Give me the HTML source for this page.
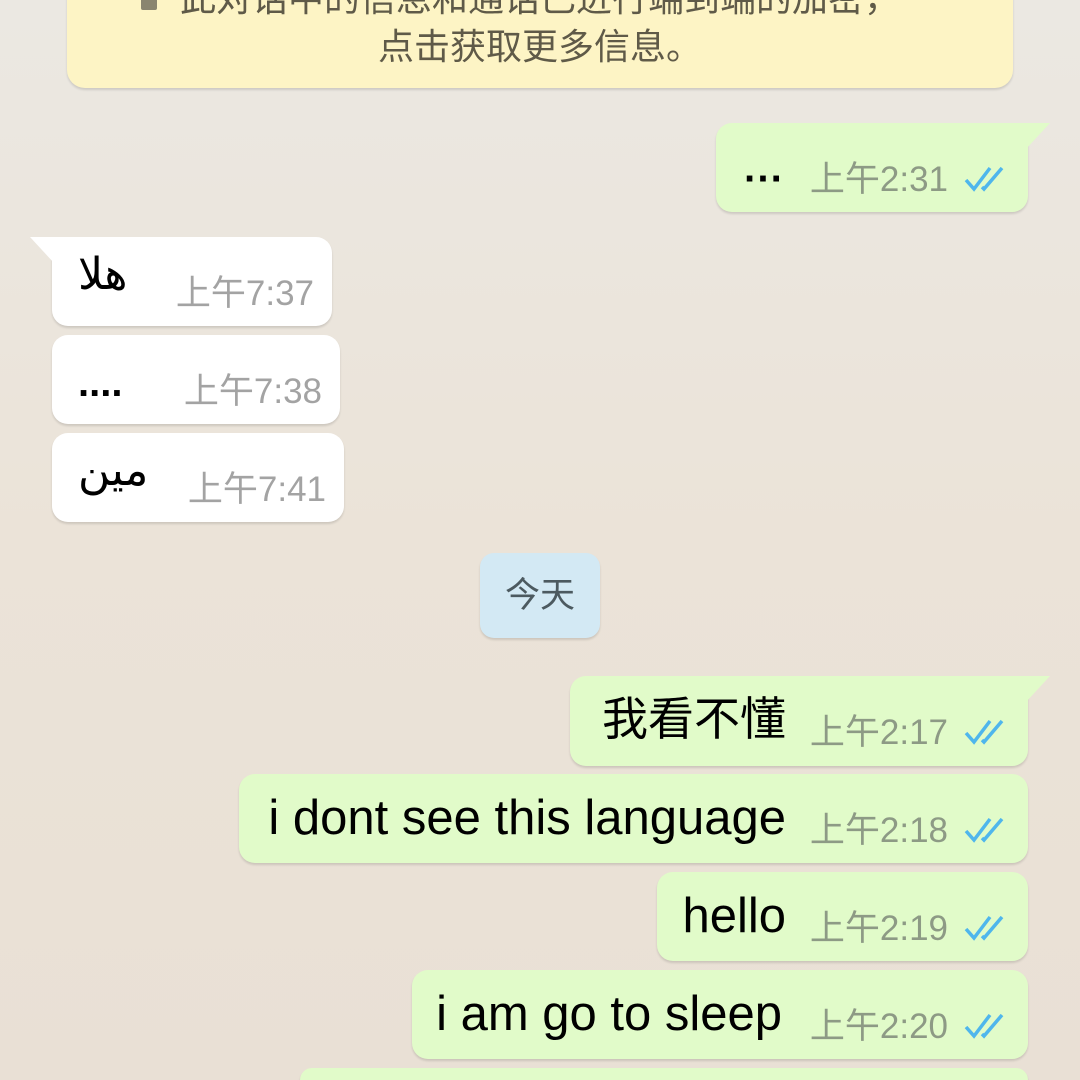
<!DOCTYPE html>
<html><head><meta charset="utf-8"><style>
html,body{margin:0;padding:0;width:1080px;height:1080px;overflow:hidden}
body{position:relative;background:linear-gradient(#ebe8e2,#ebe3d8 50%,#e9e0d5);font-family:"Liberation Sans","Noto Sans CJK SC",sans-serif}
.b{position:absolute;border-radius:16px;box-shadow:0 2px 2px rgba(0,0,0,.13)}
.s{background:#e1fbc9}
.r{background:#fff}
.t{position:absolute;font-size:49px;color:#000;white-space:nowrap;line-height:1}
.tm{position:absolute;font-size:35px;white-space:nowrap;line-height:1;color:#8d9a85}
.r .tm{color:#a3a3a3}
.ck{position:absolute;width:44px;height:28px}
.tailR{position:absolute;right:-22px;top:0;width:0;height:0;border-top:26px solid #e1fbc9;border-right:24px solid transparent}
.tailL{position:absolute;left:-22px;top:0;width:0;height:0;border-top:26px solid #fff;border-left:24px solid transparent}
.ar{font-family:"DejaVu Sans",sans-serif;font-size:44px}
</style></head><body>

<div class="b" style="left:67px;top:-30px;width:946px;height:118px;background:#fdf4c5;border-radius:18px">
<div style="position:absolute;left:74px;top:26px;width:16px;height:14px;background:#8a8570;border-radius:2px"></div>
<div style="position:absolute;left:0;right:0;top:5px;text-align:center;font-size:36px;color:#5f5a48;line-height:48px">此对话中的信息和通话已进行端到端的加密，<br>点击获取更多信息。</div>
</div>

<div class="b s" style="left:716px;top:123px;width:312px;height:89px;border-top-right-radius:0">
<div class="tailR"></div>
<div class="t" style="left:28px;top:36px;font-weight:bold;font-size:40px">···</div>
<div class="tm" style="right:80px;top:39px">上午2:31</div>
<svg class="ck" style="right:22px;top:42px" viewBox="0 0 44 28"><path d="M4 15l8 9L28 3M20 22l2 2L40 3" fill="none" stroke="#4fb6ec" stroke-width="3.5"/></svg>
</div>

<div class="b r" style="left:52px;top:237px;width:280px;height:89px;border-top-left-radius:0">
<div class="tailL"></div>
<div class="t ar" style="left:26px;top:16px">هلا</div>
<div class="tm" style="right:18px;top:39px">上午7:37</div>
</div>

<div class="b r" style="left:52px;top:335px;width:288px;height:89px">
<div class="t" style="left:26px;top:28px;font-weight:bold;font-size:40px">....</div>
<div class="tm" style="right:18px;top:39px">上午7:38</div>
</div>

<div class="b r" style="left:52px;top:433px;width:292px;height:89px">
<div class="t ar" style="left:26px;top:16px">مين</div>
<div class="tm" style="right:18px;top:39px">上午7:41</div>
</div>

<div class="b" style="left:480px;top:553px;width:120px;height:85px;background:#d3e9f4;border-radius:14px">
<div style="position:absolute;left:0;right:0;top:25px;text-align:center;font-size:35px;color:#4c5a60;line-height:1">今天</div>
</div>

<div class="b s" style="left:570px;top:676px;width:458px;height:90px;border-top-right-radius:0">
<div class="tailR"></div>
<div class="t" style="right:242px;top:20px;font-size:46px">我看不懂</div>
<div class="tm" style="right:80px;top:39px">上午2:17</div>
<svg class="ck" style="right:22px;top:42px" viewBox="0 0 44 28"><path d="M4 15l8 9L28 3M20 22l2 2L40 3" fill="none" stroke="#4fb6ec" stroke-width="3.5"/></svg>
</div>

<div class="b s" style="left:239px;top:774px;width:789px;height:89px">
<div class="t" style="right:242px;top:20px">i dont see this language</div>
<div class="tm" style="right:80px;top:39px">上午2:18</div>
<svg class="ck" style="right:22px;top:42px" viewBox="0 0 44 28"><path d="M4 15l8 9L28 3M20 22l2 2L40 3" fill="none" stroke="#4fb6ec" stroke-width="3.5"/></svg>
</div>

<div class="b s" style="left:657px;top:872px;width:371px;height:89px">
<div class="t" style="right:242px;top:20px">hello</div>
<div class="tm" style="right:80px;top:39px">上午2:19</div>
<svg class="ck" style="right:22px;top:42px" viewBox="0 0 44 28"><path d="M4 15l8 9L28 3M20 22l2 2L40 3" fill="none" stroke="#4fb6ec" stroke-width="3.5"/></svg>
</div>

<div class="b s" style="left:412px;top:970px;width:616px;height:89px">
<div class="t" style="right:246px;top:20px">i am go to sleep</div>
<div class="tm" style="right:80px;top:39px">上午2:20</div>
<svg class="ck" style="right:22px;top:42px" viewBox="0 0 44 28"><path d="M4 15l8 9L28 3M20 22l2 2L40 3" fill="none" stroke="#4fb6ec" stroke-width="3.5"/></svg>
</div>

<div class="b s" style="left:300px;top:1068px;width:728px;height:12px;border-radius:16px 16px 0 0"></div>

</body></html>
